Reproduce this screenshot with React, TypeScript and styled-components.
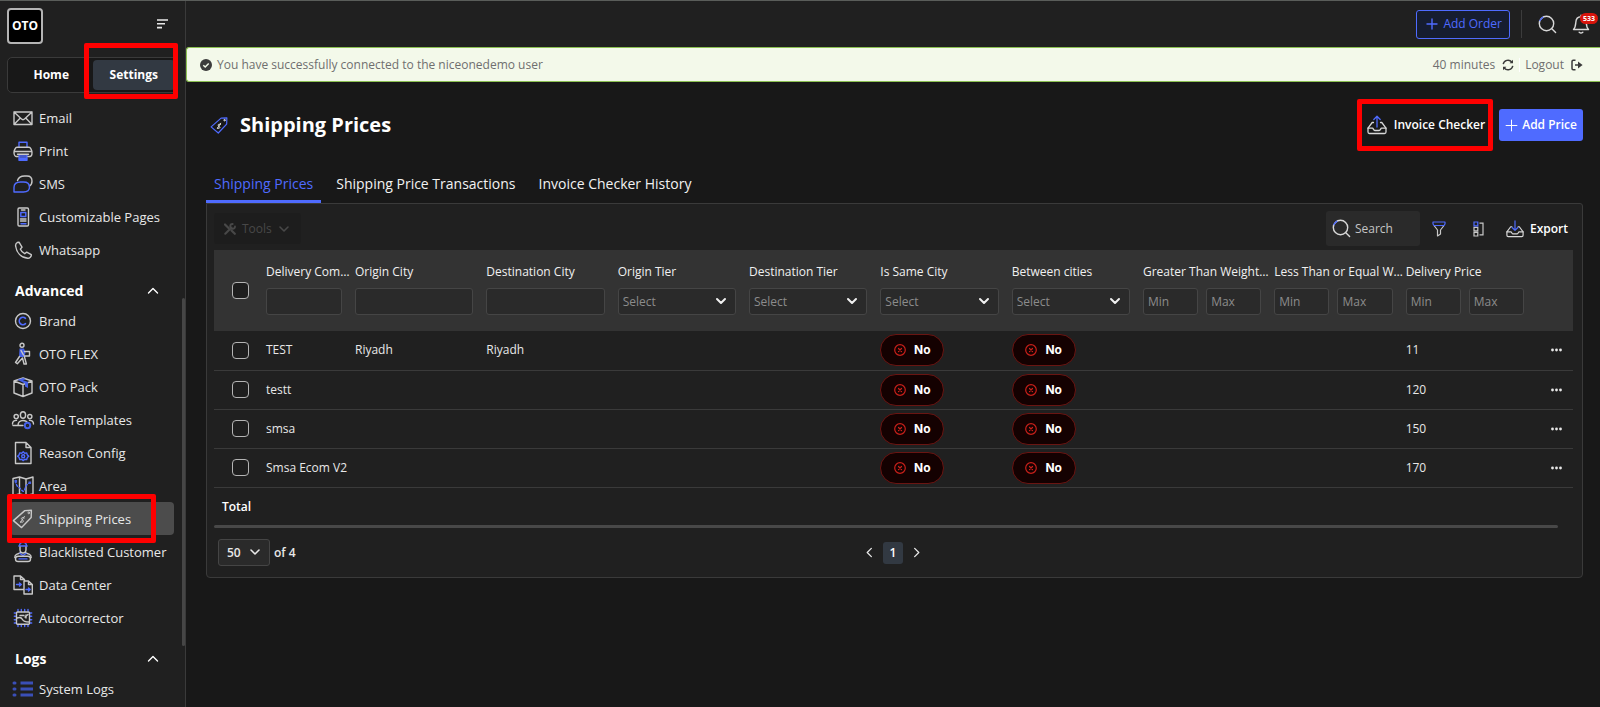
import React from 'react';
import styled, { createGlobalStyle } from 'styled-components';

const c = {
  page: '#181818',
  panel: '#202020',
  line: '#3a3a3a',
  field: '#2a2a2a',
  head: '#333333',
  text: '#e8e8e8',
  muted: '#8c8c8c',
  blue: '#4f6bff',
  slate: '#323942',
  red: '#ff0000',
};

const GlobalStyle = createGlobalStyle`
  * { box-sizing: border-box; }
  body {
    margin: 0;
    background: ${c.page};
    color: ${c.text};
    font: 500 12px/20px "Open Sans", "Noto Sans", sans-serif;
  }
  button, input, select { font: inherit; color: inherit; }
  button { border: 0; background: none; padding: 0; cursor: pointer; }
  a { color: inherit; text-decoration: none; }
  h1, h2, p { margin: 0; }
`;

/* ---------- shell ---------- */

const Page = styled.div`
  display: flex;
  height: 100vh;
  border-top: 1px solid #5a5d5a;
  overflow: hidden;
`;

const Sidebar = styled.aside`
  position: relative;
  flex: 0 0 186px;
  background: ${c.panel};
  border-right: 1px solid ${c.line};
  overflow: hidden;
`;

const SidebarTop = styled.div`
  display: flex;
  justify-content: space-between;
  align-items: center;
  padding: 7px 17px 0 7px;
`;

const Logo = styled.a`
  width: 36px;
  height: 36px;
  display: grid;
  place-items: center;
  background: #000;
  border: 2px solid #b4b4b4;
  border-radius: 4px;
  color: #fff;
  font-weight: 700;
  font-size: 12px;
`;

const IconButton = styled.button`
  display: grid;
  place-items: center;
  color: ${c.text};
`;

const MenuToggle = styled(IconButton)`
  margin-bottom: 4px;
`;

const ModeSwitch = styled.div`
  display: grid;
  grid-template-columns: 1fr 1fr;
  margin: 13px 7px 8px 7px;
  padding: 2px;
  height: 36px;
  background: ${c.page};
  border: 1px solid ${c.line};
  border-radius: 5px;
`;

const ModeButton = styled.button<{ $active?: boolean }>`
  position: relative;
  border-radius: 4px;
  font-size: 12px;
  font-weight: 700;
  color: #fff;
  background: ${p => (p.$active ? c.slate : 'transparent')};
`;

const Callout = styled.span<{ $inset: string }>`
  position: absolute;
  inset: ${p => p.$inset};
  z-index: 2;
  border: 5px solid ${c.red};
  border-radius: 2px;
  pointer-events: none;
`;

const SectionTitle = styled.button`
  display: flex;
  width: 100%;
  height: 38px;
  padding: 11px 26px 0 15px;
  align-items: center;
  justify-content: space-between;
  font-size: 14px;
  font-weight: 700;
  color: #fff;
`;

const NavItem = styled.a<{ $active?: boolean }>`
  position: relative;
  display: flex;
  align-items: center;
  gap: 4px;
  height: 33px;
  margin: 0 11px 0 10px;
  padding-left: 1px;
  border-radius: 4px;
  font-size: 13px;
  white-space: nowrap;
  background: ${p => (p.$active ? '#4c4c4c' : 'transparent')};
`;

const NavIcon = styled.svg`
  flex: none;
  width: 24px;
  height: 24px;
  fill: none;
  stroke: #c8c8c8;
  stroke-width: 1.4;
  stroke-linecap: round;
  stroke-linejoin: round;
  .b { stroke: ${c.blue}; }
  .bf { stroke: none; fill: #4560e6; }
  .dim { stroke: #3a4fb8; }
  .in { stroke-width: 1; }
`;

const Scroller = styled.span`
  position: absolute;
  right: 0;
  top: 297px;
  width: 3px;
  height: 348px;
  border-radius: 2px;
  background: #464646;
`;

const Main = styled.main`
  flex: 1;
  min-width: 0;
`;

const TopBar = styled.header`
  display: flex;
  align-items: center;
  justify-content: flex-end;
  height: 46px;
  background: ${c.panel};
`;

const AddOrder = styled.button`
  display: flex;
  align-items: center;
  gap: 5px;
  height: 29px;
  padding: 0 7px 0 9px;
  border: 1px solid ${c.blue};
  border-radius: 3px;
  background: #161d30;
  color: ${c.blue};
`;

const Divider = styled.span<{ $h: number; $color: string }>`
  width: 1px;
  height: ${p => p.$h}px;
  background: ${p => p.$color};
`;

const TopTools = styled.div`
  display: flex;
  align-items: center;
  gap: 11px;
  padding-right: 10px;
`;

const TopIcons = styled.div`
  display: flex;
  gap: 15px;
  padding-left: 5px;
`;

const Bell = styled(IconButton)`
  position: relative;
`;

const Badge = styled.span`
  position: absolute;
  left: 8px;
  top: -1px;
  padding: 0 3px;
  border-radius: 6px;
  background: #d8140c;
  color: #fff;
  font-size: 7px;
  line-height: 11px;
  font-weight: 700;
`;

const Banner = styled.div`
  display: flex;
  justify-content: space-between;
  align-items: center;
  height: 35px;
  padding: 0 17px 0 13px;
  border: 1px solid #8cc152;
  border-right: 0;
  border-radius: 3px 0 0 3px;
  background: #f3f9ea;
  color: #6f6f6f;
  font-size: 12px;
  font-weight: 400;
`;

const BannerGroup = styled.div`
  display: flex;
  align-items: center;
  gap: 5px;
`;

const BannerAction = styled.button`
  display: flex;
  align-items: center;
  gap: 7px;
`;

const Content = styled.div`
  padding: 21px 17px 0 20px;
`;

const TitleRow = styled.div`
  display: flex;
  align-items: center;
  justify-content: space-between;
  height: 44px;
`;

const Title = styled.h1`
  display: flex;
  align-items: center;
  gap: 10px;
  padding-left: 3px;
  font-size: 20px;
  line-height: 28px;
  font-weight: 700;
  color: #fff;
`;

const Actions = styled.div`
  display: flex;
  gap: 14px;
`;

const Action = styled.button<{ $primary?: boolean }>`
  position: relative;
  display: flex;
  align-items: center;
  gap: ${p => (p.$primary ? 4 : 7)}px;
  height: 32px;
  padding: ${p => (p.$primary ? '0 6px' : '0 0 0 6px')};
  border-radius: 3px;
  font-weight: 600;
  color: #fff;
  background: ${p => (p.$primary ? c.blue : 'transparent')};
`;

const Tabs = styled.div`
  display: flex;
  margin-top: 20px;
  gap: 7px;
`;

const Tab = styled.button<{ $active?: boolean }>`
  height: 36px;
  padding: 0 8px;
  font-size: 14px;
  font-weight: 500;
  color: ${p => (p.$active ? c.blue : '#f2f2f2')};
  border-bottom: 3px solid ${p => (p.$active ? c.blue : 'transparent')};
`;

const Card = styled.section`
  border: 1px solid ${c.line};
  border-radius: 0 3px 4px 4px;
  background: ${c.panel};
  padding: 0 9px 10px 7px;
`;

const Toolbar = styled.div`
  display: flex;
  justify-content: space-between;
  align-items: center;
  height: 46px;
  padding-top: 3px;
`;

const ToolsButton = styled.button`
  display: flex;
  align-items: center;
  gap: 6px;
  height: 31px;
  padding: 0 11px 0 10px;
  border-radius: 3px;
  background: #1d1d1d;
  color: #484848;
`;

const ToolbarRight = styled.div`
  display: flex;
  align-items: center;
  gap: 6px;
  padding-right: 5px;
`;

const ToolIcons = styled.div`
  display: flex;
  gap: 14px;
  padding-right: 8px;
`;

const SearchBox = styled.label`
  display: flex;
  align-items: center;
  gap: 4px;
  width: 94px;
  height: 35px;
  padding: 0 6px;
  border-radius: 3px;
  background: ${c.field};
`;

const SearchInput = styled.input`
  min-width: 0;
  flex: 1;
  padding: 0;
  border: 0;
  outline: 0;
  background: transparent;
  &::placeholder { color: #c4c4c4; opacity: 1; }
`;

const ToolIcon = styled(IconButton)`
  width: 26px;
  height: 26px;
`;

const ExportButton = styled.button`
  display: flex;
  align-items: center;
  gap: 6px;
  font-weight: 600;
  color: #fff;
`;

const Table = styled.table`
  width: 100%;
  table-layout: fixed;
  border-collapse: collapse;
`;

const HeadRow = styled.tr`
  height: 81px;
  background: ${c.head};
`;

const HeadCell = styled.th`
  padding: 13px 0 16px 8px;
  vertical-align: top;
  text-align: left;
  font-weight: 500;
  color: #f0f0f0;
`;

const HeadLabel = styled.div`
  white-space: nowrap;
  height: 20px;
  margin-bottom: 5px;
  line-height: 18px;
`;

const Filter = styled.div`
  display: flex;
  gap: 8px;
  margin-right: 5px;
`;

const Field = styled.input`
  flex: 1;
  width: 100%;
  min-width: 0;
  height: 27px;
  padding: 0 4px;
  border: 1px solid #454545;
  border-radius: 3px;
  background: ${c.field};
  &::placeholder { color: ${c.muted}; opacity: 1; }
`;

const SelectWrap = styled.span<{ $w?: number }>`
  position: relative;
  display: block;
  flex: ${p => (p.$w ? `0 0 ${p.$w}px` : '1')};
  svg {
    position: absolute;
    right: 9px;
    top: 7px;
    pointer-events: none;
  }
`;

const Select = styled.select<{ $strong?: boolean }>`
  appearance: none;
  width: 100%;
  height: 27px;
  padding: 0 ${p => (p.$strong ? 8 : 4)}px;
  border: 1px solid #454545;
  border-radius: 3px;
  background: ${c.field};
  color: ${p => (p.$strong ? c.text : c.muted)};
  font-weight: ${p => (p.$strong ? 600 : 400)};
`;

const BodyRow = styled.tr`
  height: 39px;
  border-bottom: 1px solid ${c.line};
`;

const Cell = styled.td`
  padding: 0 0 0 8px;
  white-space: nowrap;
`;

const CheckCell = styled(Cell)`
  padding: 0 0 0 18px;
  line-height: 0;
`;

const CheckHead = styled.th`
  padding: 0 0 0 18px;
  text-align: left;
  vertical-align: middle;
  line-height: 0;
`;

const Check = styled.input`
  appearance: none;
  width: 17px;
  height: 17px;
  margin: 0;
  border: 1px solid #b4b4b4;
  border-radius: 4px;
  background: #1e1e1e;
`;

const Pill = styled.span`
  display: inline-flex;
  align-items: center;
  justify-content: center;
  gap: 8px;
  width: 64px;
  height: 32px;
  vertical-align: middle;
  border: 1px solid #6a1512;
  border-radius: 16px;
  background: #140101;
  color: #fff;
  font: 700 12px/20px Inter, sans-serif;
`;

const TotalRow = styled.div`
  height: 37px;
  padding: 0 8px;
  line-height: 37px;
  font-weight: 600;
  color: #fff;
`;

const HScroll = styled.div`
  height: 3px;
  margin-right: 15px;
  border-radius: 2px;
  background: #484848;
`;

const Footer = styled.footer`
  display: grid;
  grid-template-columns: 1fr auto 1fr;
  align-items: center;
  height: 28px;
  margin-top: 11px;
  padding: 0 5px 0 4px;
`;

const PageSize = styled.label`
  display: flex;
  align-items: center;
  gap: 4px;
  font-weight: 600;
`;

const Pager = styled.nav`
  display: flex;
  align-items: center;
  gap: 8px;
  color: #a0a0a0;
`;

const PageNumber = styled.button`
  width: 20px;
  height: 22px;
  border-radius: 3px;
  background: ${c.slate};
  color: #fff;
  font-weight: 600;
`;

/* ---------- drawings ---------- */

const Chevron = ({ size = 12, dir = 'down', width = 2 }: { size?: number; dir?: string; width?: number }) => {
  const d: Record<string, string> = {
    down: 'M2 4 6 8l4-4',
    up: 'M1.5 8 6 3.5 10.5 8',
    left: 'M8 1.5 3.5 6 8 10.5',
    right: 'M4 1.5 8.5 6 4 10.5',
  };
  return (
    <svg width={size} height={size} viewBox="0 0 12 12" fill="none" stroke="currentColor" strokeWidth={width} strokeLinecap="round" strokeLinejoin="round">
      <path d={d[dir]} />
    </svg>
  );
};

const LightChevron = styled.span`
  display: contents;
  color: #f0f0f0;
`;

const Plus = ({ size, width }: { size: number; width: number }) => (
  <svg width={size} height={size} viewBox="0 0 12 12" stroke="currentColor" strokeWidth={width} strokeLinecap="round">
    <path d="M6 1v10M1 6h10" />
  </svg>
);

const Magnifier = () => (
  <svg width="19" height="19" viewBox="0 0 19 19" fill="none" strokeWidth="1.4" strokeLinecap="round">
    <circle cx="8.5" cy="8.5" r="7.2" stroke="#d8d8d8" />
    <path d="M13.8 13.8 17.6 17.6" stroke="#d8d8d8" />
    <path d="M2 5.5A7.2 7.2 0 0 1 4.8 2.3" stroke={c.blue} />
  </svg>
);

const Tray = ({ up = false, size = 20 }: { up?: boolean; size?: number }) => (
  <svg width={size} height={size} viewBox="0 0 20 20" fill="none" strokeWidth="1.3" strokeLinecap="round" strokeLinejoin="round">
    <path d="M6.5 7.5H5.2L1 13.2V17a1.5 1.5 0 0 0 1.5 1.5h15A1.5 1.5 0 0 0 19 17v-3.8l-4.2-5.7h-1.3" stroke="#d8d8d8" />
    <path d="M1 13.2h4.500c.8 0 1 2.300 2.300 2.300h4.400c1.300 0 1.500-2.300 2.300-2.300H19" stroke="#d8d8d8" />
    <path d={up ? 'M10 12V1.3M6.8 4.5 10 1.3l3.2 3.2' : 'M10 1v10.5M6.8 8.3 10 11.5l3.2-3.2'} stroke={c.blue} />
  </svg>
);

const TagPaths = () => (
  <>
    <path className="tag" d="M13.8 3.6 20.4 3.2l-.2 7.2-9.6 10.2-8.2-7z" />
    <circle className="in" cx="17.7" cy="5.9" r=".8" />
    <path className="in" d="M13.4 9.4 9.6 15.4M13.2 10.9c-1.700-1.300-3.600.2-2.400 1.500l1.300 1c1.200 1.200-.8 2.800-2.600 1.400" />
  </>
);

const TitleTag = styled.svg`
  width: 21px;
  height: 21px;
  fill: none;
  stroke-width: 1.4;
  stroke-linejoin: round;
  stroke-linecap: round;
  .tag { stroke: ${c.blue}; }
  .in { stroke: #e4e4e4; stroke-width: 1.1; }
`;

const icons: Record<string, React.ReactNode> = {
  Email: (
    <>
      <path d="M3 6h18v12.5H3zM3 6l7.2 6.8a2.6 2.6 0 0 0 3.6 0L21 6M3 18.5l6.3-6.4M21 18.5l-6.3-6.4" />
    </>
  ),
  Print: (
    <>
      <path className="b" d="M8 8V3.2h8V8M8 16h8v5.2H8zM9 18h6M9 19.7h6" />
      <path d="M7 17.5H5.2C4 17.5 3 15.5 3 13.5S4.5 8.3 6 8.3h12c1.5 0 3 3 3 5.2s-1 4-2.2 4H17M3.5 12.5h17M6.5 15.2h11" />
    </>
  ),
  SMS: (
    <>
      <path d="M6.5 8.500C7.5 5.500 10 4 13.500 4H16c3 0 5 1.800 5 5 0 2.600-1.200 4.300-2.600 5" />
      <path className="b" d="M3 20v-4.500C3 12 5.500 10 9.500 10h3c3.500 0 6 1.800 6 5s-2.500 5-6 5z" />
    </>
  ),
  'Customizable Pages': (
    <>
      <rect x="7" y="3" width="10.5" height="18" rx="1.2" />
      <path className="b" d="M9.8 7.500h5v4h-5z" />
      <path d="M10.500 5h3.500M9.500 14h5.500M9.500 16h5.500" />
      <path className="b" d="M10 18.800h5" />
    </>
  ),
  Whatsapp: (
    <path d="M6.2 4.500 8 4.200l3 5-1.700 1.900c.8 2 2.200 3.600 4.400 4.600l2-1.600 4.600 2.600c.3 1.800-1.700 3.800-3.600 3.600C10 19.500 5.500 14.500 4.600 7.800c-.1-1.400.5-2.700 1.600-3.300z" />
  ),
  Brand: (
    <>
      <circle cx="12" cy="12" r="7.5" />
      <path className="b" d="M14.500 9.300a3.700 3.700 0 1 0 0 5.400" strokeWidth="1.6" />
    </>
  ),
  'OTO FLEX': (
    <>
      <circle cx="11" cy="3.300" r="2" />
      <path className="bf" d="M8.500 6.500h4.500l1.500 4-1 4.500H8z" />
      <path d="M13.500 9.500h5V14h-5M10 8.500l2.500 4.500M8.500 14.500l-4 6 1.800 1.200L11.500 16l1.500 6h2.400L13.500 15" />
    </>
  ),
  'OTO Pack': (
    <>
      <path d="M12 3 21 6v12l-9 3.500L3 18V6zM3 6l9 3.500L21 6M12 9.500v12" />
      <path className="bf" d="M6.500 4.800 12 3l3 1-3 1.200 5 1.900v6l-3-1.500V8.500z" />
    </>
  ),
  'Role Templates': (
    <>
      <ellipse cx="12" cy="7" rx="2.600" ry="3.300" />
      <circle cx="5.200" cy="8.600" r="2.100" />
      <circle cx="18.800" cy="8.600" r="2.100" />
      <path d="M1.500 16c0-2.500 1.800-3.600 4-3.600M22.500 16c0-2.500-1.800-3.600-4-3.600M6.500 17.500H2M7 17.500c0-3.200 2-5 5-5s4 1.200 4.600 2.500M7 17.500h5" />
      <circle className="bf" cx="16.500" cy="17.500" r="3.700" />
      <circle cx="16.500" cy="17.500" r="1" stroke="#202020" />
    </>
  ),
  'Reason Config': (
    <>
      <path d="M4.500 1.500h10.500l5 5v16H4.500zM15 1.500v5h5" />
      <path className="b" d="m12.200 10.800 1.500 1.400 2-.3.600 2 1.500 1.300-1.500 1.400-.6 2-2-.3-1.500 1.300-1.500-1.300-2 .3-.6-2-1.500-1.400 1.500-1.300.6-2 2 .3z" />
      <circle className="b" cx="12.200" cy="15.200" r="1.500" />
    </>
  ),
  Area: (
    <>
      <path d="M2 4.500 8.500 3l6.500 2 7-2v17l-7 1.500-6.500-1.500L2 21.500zM8.500 3v17M15 5v16.500" />
      <path className="b" d="M4.500 6.500c.5 4 1.500 6 3.500 7s3.500 5 5 3.500.5-6 5.500-8" strokeDasharray="2 2" />
      <path className="bf" d="M3.500 6h2.600v2.600H3.500zM17.500 7.500h2.600v2.600h-2.600z" />
    </>
  ),
  'Shipping Prices': <TagPaths />,
  'Blacklisted Customer': (
    <>
      <path className="b" d="M8.500 6c0-2.500 1.500-3.800 3.500-3.800s3.500 1.300 3.500 3.800zM7.800 6h8.400" />
      <path d="M9 7v2.500c0 2 1.400 3.500 3 3.500s3-1.500 3-3.500V7M9 13l-3.500 1.300c-1.200.5-1.700 1.800-1.700 3.200M15 13l3.500 1.300c1.200.5 1.700 1.800 1.700 3.200" />
      <path className="b" d="m9 13.500 3 2 3-2" />
      <rect x="4.500" y="16.300" width="15" height="5.200" rx="2.600" />
      <path className="b" d="M8 18.900h8" />
    </>
  ),
  'Data Center': (
    <>
      <path d="M12.500 16.500H3V3h6.500l4 3.500V8M9.500 3v3.500h4M13 8h4.500l3.800 3.500V21H13zM17.500 8v3.500h3.800" />
      <path className="b" d="M5.500 11.500h4.500M8.500 10l1.800 1.500L8.500 13M15 16.500h4M17.500 15l1.700 1.500-1.700 1.500" />
    </>
  ),
  Autocorrector: (
    <>
      <path className="b" d="M7 3.500v2M10.300 3.500v2M13.700 3.500v2M17 3.500v2M7 18.500v2M10.300 18.500v2M13.700 18.500v2M17 18.500v2M3.300 7h2M3.300 10.300h2M3.300 13.700h2M3.300 17h2M18.700 7h2M18.700 10.300h2M18.700 13.700h2M18.700 17h2" />
      <rect x="5.500" y="6" width="13" height="12.200" rx="1" />
      <path d="M6 12c3-1 4.500-.5 5.500 1.500s3 2.500 6.500 2.500M9 9.500h4M15 9v3M14 11l3-2.500" />
    </>
  ),
  'System Logs': (
    <>
      <path className="dim" d="M3 6h1M3 12h1M3 18h1" strokeWidth="3" />
      <path className="dim" d="M9.500 6H22M9.500 12H22M9.500 18H22" strokeWidth="2.800" strokeLinecap="butt" />
    </>
  ),
};

/* ---------- content ---------- */

const general = ['Email', 'Print', 'SMS', 'Customizable Pages', 'Whatsapp'];
const advanced = ['Brand', 'OTO FLEX', 'OTO Pack', 'Role Templates', 'Reason Config', 'Area', 'Shipping Prices', 'Blacklisted Customer', 'Data Center', 'Autocorrector'];
const logs = ['System Logs'];

type Kind = 'text' | 'select' | 'range';
const columns: { label: string; kind: Kind; narrow?: boolean }[] = [
  { label: 'Delivery Com…', kind: 'text', narrow: true },
  { label: 'Origin City', kind: 'text' },
  { label: 'Destination City', kind: 'text' },
  { label: 'Origin Tier', kind: 'select' },
  { label: 'Destination Tier', kind: 'select' },
  { label: 'Is Same City', kind: 'select' },
  { label: 'Between cities', kind: 'select' },
  { label: 'Greater Than Weight…', kind: 'range' },
  { label: 'Less Than or Equal W…', kind: 'range' },
  { label: 'Delivery Price', kind: 'range' },
];

const rows = [
  { name: 'TEST', origin: 'Riyadh', destination: 'Riyadh', price: '11' },
  { name: 'testt', origin: '', destination: '', price: '120' },
  { name: 'smsa', origin: '', destination: '', price: '150' },
  { name: 'Smsa Ecom V2', origin: '', destination: '', price: '170' },
];

const NavList = ({ items }: { items: string[] }) => (
  <>
    {items.map(item => {
      const active = item === 'Shipping Prices';
      return (
        <NavItem key={item} href="#" $active={active}>
          <NavIcon viewBox="0 0 24 24">{icons[item]}</NavIcon>
          {item}
          {active && <Callout $inset="-8px 18px -8px -3px" />}
        </NavItem>
      );
    })}
  </>
);

const ColumnFilter = ({ label, kind }: { label: string; kind: Kind }) => {
  if (kind === 'text') return <Field aria-label={label} />;
  if (kind === 'range')
    return (
      <>
        <Field aria-label={`${label} from`} placeholder="Min" />
        <Field aria-label={`${label} to`} placeholder="Max" />
      </>
    );
  return (
    <SelectWrap>
      <Select aria-label={label}>
        <option>Select</option>
      </Select>
      <LightChevron>
        <Chevron />
      </LightChevron>
    </SelectWrap>
  );
};

const No = () => (
  <Pill>
    <svg width="12" height="12" viewBox="0 0 12 12" fill="none" stroke="#c8201a" strokeWidth="1.2" strokeLinecap="round">
      <circle cx="6" cy="6" r="5.3" />
      <path d="m4.500 4.500 3 3M7.500 4.500l-3 3" />
    </svg>
    No
  </Pill>
);

export default function App() {
  return (
    <Page>
      <GlobalStyle />
      <Sidebar>
        <SidebarTop>
          <Logo href="#">OTO</Logo>
          <MenuToggle aria-label="Collapse menu">
            <svg width="11" height="10" viewBox="0 0 11 10" stroke="currentColor" strokeWidth="1.6">
              <path d="M0 1h11M0 4.800h8M0 8.600h5" />
            </svg>
          </MenuToggle>
        </SidebarTop>
        <ModeSwitch>
          <ModeButton>Home</ModeButton>
          <ModeButton $active>
            Settings
            <Callout $inset="-17px -3px -9px -9px" />
          </ModeButton>
        </ModeSwitch>
        <nav>
          <NavList items={general} />
          <SectionTitle>
            Advanced <Chevron dir="up" width={1.4} />
          </SectionTitle>
          <NavList items={advanced} />
          <SectionTitle>
            Logs <Chevron dir="up" width={1.4} />
          </SectionTitle>
          <NavList items={logs} />
        </nav>
        <Scroller />
      </Sidebar>

      <Main>
        <TopBar>
          <TopTools>
            <AddOrder>
              <Plus size={12} width={1.4} /> Add Order
            </AddOrder>
            <Divider $h={28} $color="#3c3c3c" />
            <TopIcons>
              <IconButton aria-label="Search">
                <Magnifier />
              </IconButton>
              <Bell aria-label="Notifications">
                <svg width="18" height="20" viewBox="0 0 18 20" fill="none" stroke="#d8d8d8" strokeWidth="1.4" strokeLinecap="round" strokeLinejoin="round">
                  <path d="M9 1.200v1.500M1.500 15.500C3.500 13.500 3.600 11 3.800 8.500 4 5 6 2.800 9 2.800s5 2.200 5.200 5.700c.2 2.500.3 5 2.300 7zM7.200 18.300c1 .8 2.600.8 3.600 0" />
                </svg>
                <Badge>533</Badge>
              </Bell>
            </TopIcons>
          </TopTools>
        </TopBar>

        <Banner role="status">
          <BannerGroup>
            <svg width="12" height="12" viewBox="0 0 12 12">
              <circle cx="6" cy="6" r="6" fill="#3c3c3c" />
              <path d="m3.300 6.200 1.900 1.800 3.500-3.600" fill="none" stroke="#f3f9ea" strokeWidth="1.5" />
            </svg>
            You have successfully connected to the niceonedemo user
          </BannerGroup>
          <BannerGroup>
            <BannerAction>
              40 minutes
              <svg width="12" height="12" viewBox="0 0 12 12" fill="none" stroke="#3a3a3a" strokeWidth="1.4">
                <path d="M1.200 5.200A4.900 4.900 0 0 1 9.800 3M10.800 6.800A4.900 4.900 0 0 1 2.200 9" />
                <path d="M11 .8v3.400H7.600zM1 11.200V7.800h3.400z" fill="#3a3a3a" stroke="none" />
              </svg>
            </BannerAction>
            <Divider $h={14} $color="#ffffff" />
            <BannerAction>
              Logout
              <svg width="12" height="12" viewBox="0 0 12 12" fill="none" stroke="#3a3a3a" strokeWidth="1.5">
                <path d="M4.500 1.200H2.200c-.8 0-1.200.5-1.200 1.200v7.200c0 .7.400 1.200 1.200 1.200h2.300M4 6h4" />
                <path d="M7 2.500 11.600 6 7 9.500z" fill="#3a3a3a" stroke="none" />
              </svg>
            </BannerAction>
          </BannerGroup>
        </Banner>

        <Content>
          <TitleRow>
            <Title>
              <TitleTag viewBox="0 0 24 24">
                <TagPaths />
              </TitleTag>
              Shipping Prices
            </Title>
            <Actions>
              <Action>
                <Tray up />
                Invoice Checker
                <Callout $inset="-10px -8px -10px -4px" />
              </Action>
              <Action $primary>
                <Plus size={13} width={0.9} /> Add Price
              </Action>
            </Actions>
          </TitleRow>

          <Tabs>
            <Tab $active>Shipping Prices</Tab>
            <Tab>Shipping Price Transactions</Tab>
            <Tab>Invoice Checker History</Tab>
          </Tabs>

          <Card>
            <Toolbar>
              <ToolsButton>
                <svg width="12" height="12" viewBox="0 0 12 12" fill="none" stroke="currentColor" strokeLinecap="round">
                  <path d="M1 1.500 4.500 5M7.500 7.500l3.300 3.300" strokeWidth="2.2" />
                  <path d="M1.300 10.700 7.500 4.500" strokeWidth="2" />
                  <path d="M8.700 1a2.400 2.400 0 1 0 2.300 2.500" strokeWidth="1.8" />
                </svg>
                Tools
                <Chevron width={1.6} />
              </ToolsButton>
              <ToolbarRight>
                <SearchBox>
                  <Magnifier />
                  <SearchInput aria-label="Search" placeholder="Search" />
                </SearchBox>
                <ToolIcons>
                  <ToolIcon aria-label="Filter">
                    <svg width="14" height="16" viewBox="0 0 14 16" fill="none" strokeWidth="1.2" strokeLinejoin="round">
                      <path d="M2 4.500 5.500 9v6L8.500 13V9L12 4.500" stroke="#c8c8c8" />
                      <path d="M1 1h12v2l-1 1.500H2L1 3z" stroke={c.blue} />
                    </svg>
                  </ToolIcon>
                  <ToolIcon aria-label="Columns">
                    <svg width="11" height="16" viewBox="0 0 11 16" fill="none" strokeWidth="1.2">
                      <path d="M1 6.300h3.800v3.600H1zM1 11.400h3.800V15H1zM6.500 2.200H10v11.600H6.500" stroke="#c8c8c8" />
                      <path d="M1 1h3.800v3.800H1z" stroke={c.blue} />
                    </svg>
                  </ToolIcon>
                </ToolIcons>
                <ExportButton>
                  <Tray size={18} /> Export
                </ExportButton>
              </ToolbarRight>
            </Toolbar>

            <Table>
              <colgroup>
                <col width="44" />
                {columns.map(col => (
                  <col key={col.label} width={col.narrow ? 89 : undefined} />
                ))}
                <col width="44" />
              </colgroup>
              <thead>
                <HeadRow>
                  <CheckHead>
                    <Check type="checkbox" aria-label="Select all rows" />
                  </CheckHead>
                  {columns.map(col => (
                    <HeadCell key={col.label}>
                      <HeadLabel>{col.label}</HeadLabel>
                      <Filter>
                        <ColumnFilter label={col.label} kind={col.kind} />
                      </Filter>
                    </HeadCell>
                  ))}
                  <HeadCell />
                </HeadRow>
              </thead>
              <tbody>
                {rows.map(row => (
                  <BodyRow key={row.name}>
                    <CheckCell>
                      <Check type="checkbox" aria-label={`Select ${row.name}`} />
                    </CheckCell>
                    <Cell>{row.name}</Cell>
                    <Cell>{row.origin}</Cell>
                    <Cell>{row.destination}</Cell>
                    <Cell />
                    <Cell />
                    <Cell>
                      <No />
                    </Cell>
                    <Cell>
                      <No />
                    </Cell>
                    <Cell />
                    <Cell />
                    <Cell>{row.price}</Cell>
                    <Cell>
                      <IconButton aria-label={`Actions for ${row.name}`}>
                        <svg width="28" height="12" viewBox="0 0 28 12" fill="#e8e8e8">
                          <circle cx="15.500" cy="6" r="1.400" />
                          <circle cx="19.500" cy="6" r="1.400" />
                          <circle cx="23.500" cy="6" r="1.400" />
                        </svg>
                      </IconButton>
                    </Cell>
                  </BodyRow>
                ))}
              </tbody>
            </Table>
            <TotalRow>Total</TotalRow>
            <HScroll />
            <Footer>
              <PageSize>
                <SelectWrap $w={52}>
                  <Select $strong aria-label="Rows per page">
                    <option>50</option>
                  </Select>
                  <Chevron width={1.6} />
                </SelectWrap>
                of 4
              </PageSize>
              <Pager aria-label="Pages">
                <IconButton aria-label="Previous page">
                  <Chevron dir="left" size={11} width={1.4} />
                </IconButton>
                <PageNumber>1</PageNumber>
                <IconButton aria-label="Next page">
                  <Chevron dir="right" size={11} width={1.4} />
                </IconButton>
              </Pager>
            </Footer>
          </Card>
        </Content>
      </Main>
    </Page>
  );
}
